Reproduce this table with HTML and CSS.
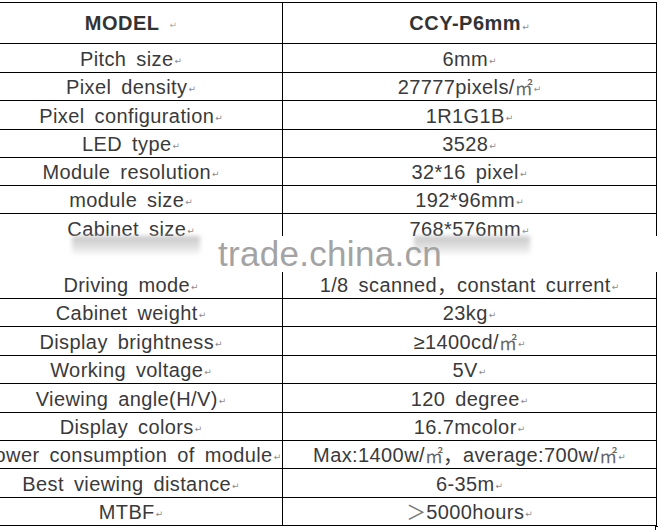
FILE: index.html
```html
<!DOCTYPE html>
<html>
<head>
<meta charset="utf-8">
<link rel="stylesheet" href="styles.css">
</head>
<body>
<div class="page">
  <div class="sheet">
    <div class="c h">MODEL <span class="pm gap">↵</span></div>
    <div class="c h">CCY-P6mm<span class="pm">↵</span></div>

    <div class="c">Pitch size<span class="pm">↵</span></div>
    <div class="c">6mm<span class="pm">↵</span></div>

    <div class="c">Pixel density<span class="pm">↵</span></div>
    <div class="c">27777pixels/<span class="sq">㎡</span><span class="pm">↵</span></div>

    <div class="c">Pixel configuration<span class="pm">↵</span></div>
    <div class="c">1R1G1B<span class="pm">↵</span></div>

    <div class="c">LED type<span class="pm">↵</span></div>
    <div class="c">3528<span class="pm">↵</span></div>

    <div class="c">Module resolution<span class="pm">↵</span></div>
    <div class="c">32*16 pixel<span class="pm">↵</span></div>

    <div class="c">module size<span class="pm">↵</span></div>
    <div class="c">192*96mm<span class="pm">↵</span></div>

    <div class="c split">
      <div class="sub">Cabinet size<span class="pm">↵</span></div>
      <div class="sub">Driving mode<span class="pm">↵</span></div>
    </div>
    <div class="c split">
      <div class="sub">768*576mm<span class="pm">↵</span></div>
      <div class="sub">1/8 scanned<span class="cjk">，</span>constant current<span class="pm">↵</span></div>
    </div>

    <div class="c">Cabinet weight<span class="pm">↵</span></div>
    <div class="c">23kg<span class="pm">↵</span></div>

    <div class="c">Display brightness<span class="pm">↵</span></div>
    <div class="c">≥1400cd/<span class="sq">㎡</span><span class="pm">↵</span></div>

    <div class="c">Working voltage<span class="pm">↵</span></div>
    <div class="c">5V<span class="pm">↵</span></div>

    <div class="c">Viewing angle(H/V)<span class="pm">↵</span></div>
    <div class="c">120 degree<span class="pm">↵</span></div>

    <div class="c">Display colors<span class="pm">↵</span></div>
    <div class="c">16.7mcolor<span class="pm">↵</span></div>

    <div class="c">Power consumption of module<span class="pm">↵</span></div>
    <div class="c">Max:1400w/<span class="sq">㎡</span><span class="cjk">，</span>average:700w/<span class="sq">㎡</span><span class="pm">↵</span></div>

    <div class="c">Best viewing distance<span class="pm">↵</span></div>
    <div class="c">6-35m<span class="pm">↵</span></div>

    <div class="c">MTBF<span class="pm">↵</span></div>
    <div class="c"><span class="cjk gt">＞</span>5000hours<span class="pm">↵</span></div>
  </div>

  <div class="band"></div>
  <div class="smear smear-l"></div>
  <div class="smear smear-r"></div>
  <div class="watermark">trade.china.cn</div>
  <div class="corner"></div>
</div>
</body>
</html>
```

FILE: styles.css
```css
html, body {
  margin: 0;
  padding: 0;
  background: #fff;
  overflow: hidden;
}

.page {
  position: relative;
  width: 658px;
  height: 530px;
  overflow: hidden;
  font-family: "Liberation Sans", Arial, "Noto Sans CJK SC", sans-serif;
  color: #3a3a3a;
}

.sheet {
  display: grid;
  grid-template-columns: 303px 374px;
  grid-template-rows: 41px 29px 28px 29px 28px 28px 28px 85px 28px 29px 28px 29px 28px 28px 29px 28px;
  margin-left: -20px;
  margin-top: 2px;
  border-top: 1px solid #000;
  width: 677px;
}

.c {
  box-sizing: border-box;
  border-bottom: 1px solid #000;
  border-right: 1px solid #000;
  display: flex;
  align-items: center;
  justify-content: center;
  font-size: 20px;
  letter-spacing: 0.4px;
  word-spacing: 4px;
  white-space: nowrap;
  line-height: 1;
  padding-top: 1px;
}

.h {
  font-weight: bold;
  letter-spacing: 0.5px;
  word-spacing: 0;
  padding-top: 0;
  color: #333;
}

.split {
  flex-direction: column;
  justify-content: space-between;
  align-items: stretch;
  padding-top: 0;
}

.sub {
  height: 28px;
  display: flex;
  align-items: center;
  justify-content: center;
  padding-top: 1px;
  box-sizing: border-box;
}

.pm {
  font-family: "DejaVu Sans", sans-serif;
  font-size: 9px;
  font-weight: normal;
  color: #8c8c8c;
  letter-spacing: 0;
  margin-left: 1px;
  align-self: flex-end;
  margin-bottom: 6px;
}

.h .pm {
  margin-bottom: 11px;
}

.h .pm.gap {
  margin-left: 10px;
  margin-bottom: 13px;
  color: #aaa;
}

.sq {
  font-family: "Noto Sans CJK SC", sans-serif;
  font-size: 18px;
  color: #666;
  letter-spacing: 0;
}

.cjk {
  font-family: "Noto Sans CJK SC", sans-serif;
  letter-spacing: 0;
}

.gt {
  color: #777;
  font-weight: normal;
}

.band {
  position: absolute;
  left: 0;
  top: 236px;
  width: 658px;
  height: 36px;
  background: #fff;
}

.smear {
  position: absolute;
  top: 236px;
  height: 18px;
  background: linear-gradient(#b8b8b8, #f2f2f2);
  filter: blur(2px);
  opacity: 0.8;
}

.smear-l {
  left: 72px;
  width: 128px;
}

.smear-r {
  left: 414px;
  width: 116px;
}

.watermark {
  position: absolute;
  left: 218px;
  top: 236px;
  font-size: 35px;
  line-height: 1;
  color: #a3a3a3;
  letter-spacing: 0.3px;
  white-space: nowrap;
}

.corner {
  position: absolute;
  left: 655px;
  top: 526px;
  width: 4px;
  height: 6px;
  border-left: 1px solid #000;
  border-top: 1px solid #000;
}
```
